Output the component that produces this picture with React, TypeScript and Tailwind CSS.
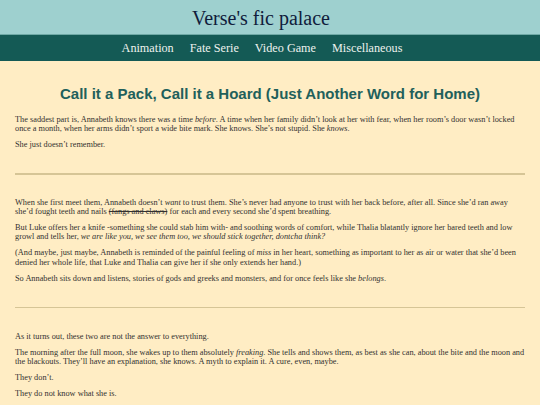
import React from "react";

const serif = { fontFamily: '"Liberation Serif", "Times New Roman", serif' };

function P({ children, className = "" }: { children: React.ReactNode; className?: string }) {
  return <p className={"text-[8.3px] leading-[9.2px] mb-[6.8px] text-[#333130] " + className}>{children}</p>;
}

function Rule({ className = "" }: { className?: string }) {
  return <div className={"h-[1.5px] bg-[#d6c596] mt-[17.2px] mb-[23.4px] " + className} />;
}

export default function App() {
  return (
    <div className="min-h-[405px] w-[540px] bg-[#ffedc4]" style={serif}>
      <header>
        <div className="h-[35px] bg-[#9ed0cf] border-b border-[#6fa9a6] flex items-center justify-center pr-[18px]">
          <h1 className="text-[20px] leading-[24px] text-[#101c3c] pt-[1px]">Verse's fic palace</h1>
        </div>
        <nav className="h-[26px] bg-[#145a55] flex items-center justify-center">
          {["Animation", "Fate Serie", "Video Game", "Miscellaneous"].map((l) => (
            <a key={l} className="text-[12.2px] leading-[14px] text-[#eef2ee] mr-[16px]">
              {l}
            </a>
          ))}
        </nav>
      </header>
      <main className="px-[15px] pt-[23.8px] flex flex-col">
        <h2
          className="text-[15px] leading-[18px] font-bold text-center text-[#21605b] mb-[11.9px]"
          style={{ fontFamily: '"Liberation Sans", Arial, sans-serif' }}
        >
          Call it a Pack, Call it a Hoard (Just Another Word for Home)
        </h2>
        <P>
          The saddest part is, Annabeth knows there was a time <em>before</em>. A time when her family didn’t look at her with
          fear, when her room’s door wasn’t locked once a month, when her arms didn’t sport a wide bite mark. She knows. She’s
          not stupid. She <em>knows</em>.
        </P>
        <P>She just doesn’t remember.</P>
        <Rule />
        <P>
          When she first meet them, Annabeth doesn’t <em>want</em> to trust them. She’s never had anyone to trust with her back
          before, after all. Since she’d ran away she’d fought teeth and nails <span className="line-through">(fangs and claws)</span>{" "}
          for each and every second she’d spent breathing.
        </P>
        <P>
          But Luke offers her a knife -something she could stab him with- and soothing words of comfort, while Thalia blatantly
          ignore her bared teeth and low growl and tells her,{" "}
          <em>we are like you, we see them too, we should stick together, dontcha think?</em>
        </P>
        <P>
          (And maybe, just maybe, Annabeth is reminded of the painful feeling of <em>miss</em> in her heart, something as
          important to her as air or water that she’d been denied her whole life, that Luke and Thalia can give her if she only
          extends her hand.)
        </P>
        <P>
          So Annabeth sits down and listens, stories of gods and greeks and monsters, and for once feels like she{" "}
          <em>belongs</em>.
        </P>
        <Rule />
        <P>As it turns out, these two are not the answer to everything.</P>
        <P>
          The morning after the full moon, she wakes up to them absolutely <em>freaking</em>. She tells and shows them, as best
          as she can, about the bite and the moon and the blackouts. They’ll have an explanation, she knows. A myth to explain
          it. A cure, even, maybe.
        </P>
        <P>They don’t.</P>
        <P>They do not know what she is.</P>
      </main>
    </div>
  );
}
